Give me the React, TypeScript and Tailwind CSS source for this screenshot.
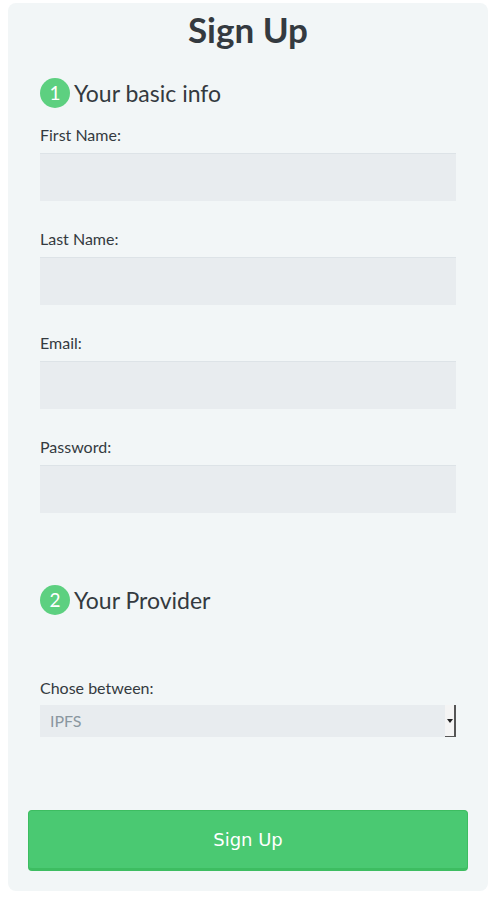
import React from 'react';

const Step = ({ n, title }: { n: number; title: string }) => (
  <div className="flex items-center">
    <span className="flex h-[30px] w-[30px] items-center justify-center rounded-full bg-[#5dd080] text-[19px] text-white">
      {n}
    </span>
    <span className="ml-[4px] text-[23px] text-[#343a40]">{title}</span>
  </div>
);

const Field = ({ label }: { label: string }) => (
  <div className="flex flex-col">
    <label className="text-[16px] leading-[20px] text-[#343a40]">{label}</label>
    <input
      type="text"
      className="mt-[8px] h-[48px] w-full border-t border-[#dde3e7] bg-[#e8ecef] outline-none"
    />
  </div>
);

export default function App() {
  return (
    <div className="min-h-screen bg-white pl-[8px] pr-[9px] pt-[3px] font-['Lato',sans-serif]">
      <div className="rounded-[8px] bg-[#f2f6f7] px-[20px] pb-[20px] pt-[6px]">
        <h1 className="text-center text-[35px] font-bold leading-[40px] text-[#343a40]">Sign Up</h1>

        <div className="px-[12px]">
          <div className="mt-[27px]">
            <Step n={1} title="Your basic info" />
          </div>

          <div className="mt-[14px] flex flex-col gap-[28px]">
            <Field label="First Name:" />
            <Field label="Last Name:" />
            <Field label="Email:" />
            <Field label="Password:" />
          </div>

          <div className="mt-[70px]">
            <Step n={2} title="Your Provider" />
          </div>

          <div className="mt-[61px] flex flex-col">
            <label className="text-[16px] leading-[20px] text-[#343a40]">Chose between:</label>
            <div className="mt-[7px] flex h-[32px] items-stretch">
              <div className="flex flex-1 items-center bg-[#e8ecef] pl-[10px] text-[16px] text-[#8a979f]">
                IPFS
              </div>
              <div className="flex w-[11px] items-center justify-center border-r-2 border-b border-[#555] bg-[#f4f4f4]">
                <svg width="6" height="4" viewBox="0 0 6 4">
                  <path d="M0 0h6L3 4z" fill="#222" />
                </svg>
              </div>
            </div>
          </div>
        </div>

        <button className="mt-[73px] h-[61px] w-full rounded-[4px] border border-b-[3px] border-[#3dbd61] bg-[#4ac972] font-['DejaVu_Sans',sans-serif] text-[18px] text-white">
          Sign Up
        </button>
      </div>
    </div>
  );
}
